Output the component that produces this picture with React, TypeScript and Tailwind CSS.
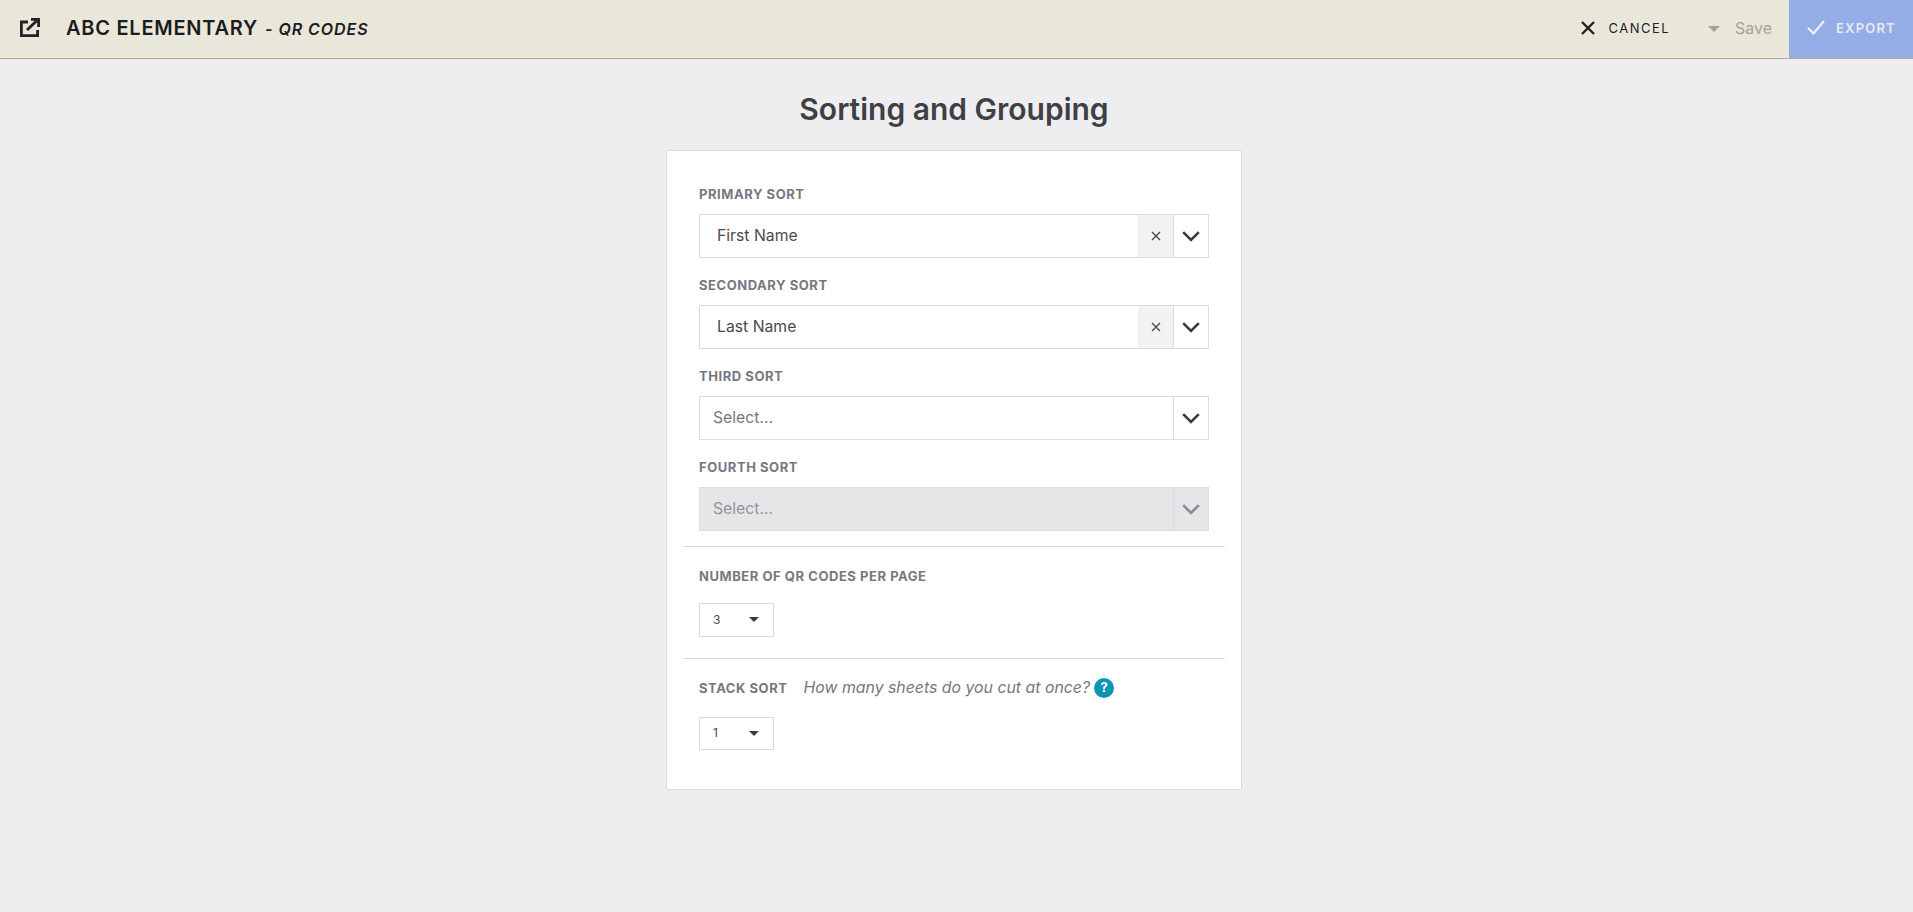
import React from 'react';

const Chevron = ({ muted }: { muted?: boolean }) => (
  <svg width="18" height="11" viewBox="0 0 18 11" fill="none">
    <path d="M1.2 1.2L9 9L16.8 1.2" stroke={muted ? '#8b8b93' : '#3a3a40'} strokeWidth="2.6" />
  </svg>
);

const Caret = () => (
  <svg width="10" height="5" viewBox="0 0 10 5">
    <path d="M0 0H10L5 5Z" fill="#3a3a40" />
  </svg>
);

const SortSelect = ({ label, value, disabled }: { label: string; value?: string; disabled?: boolean }) => (
  <div className="mb-[20.5px] last:mb-[15.5px]">
    <div className="h-[14px] mb-[13px] pt-[2px] flex items-center text-[13px] font-bold tracking-[0.55px] text-[#77777f]">{label}</div>
    <div className={`flex h-[43.5px] border-[1.5px] border-[#dcdcdc] ${disabled ? 'bg-[#e6e6e9]' : 'bg-white'}`}>
      {value ? (
        <div className="flex-1 flex items-center pl-[17px] text-[15.75px] text-[#4a4a50]">{value}</div>
      ) : (
        <div className={`flex-1 flex items-center pl-[13px] text-[15.75px] ${disabled ? 'text-[#94949c]' : 'text-[#77777f]'}`}>
          Select...
        </div>
      )}
      {value && (
        <div className="w-[35px] flex items-center justify-center bg-[#f2f2f2] text-[#3a3a40]">
          <svg width="10" height="10" viewBox="0 0 10 10" fill="none">
            <path d="M1 1L9 9M9 1L1 9" stroke="#3f4650" strokeWidth="1.3" />
          </svg>
        </div>
      )}
      <div className="w-[35px] flex items-center justify-center border-l-[1.5px] border-[#dcdcdc] pt-[1px]">
        <Chevron muted={disabled} />
      </div>
    </div>
  </div>
);

const SmallSelect = ({ value }: { value: string }) => (
  <div className="w-[75px] h-[33.5px] border-[1.5px] border-[#dcdcdc] flex items-center justify-between pl-[13px] pr-[14px] text-[12px] text-[#4a4a50]">
    <span>{value}</span>
    <Caret />
  </div>
);

export default function App() {
  return (
    <div className="min-h-[912px] bg-[#eeeef0] font-['Inter',sans-serif]">
      <header className="h-[59px] bg-[#e9e7da] border-b-[1.5px] border-[#acaa97] flex items-stretch">
        <div className="flex items-center pl-[20px] pb-[3px]">
          <svg width="20" height="19" viewBox="0 0 20 19" fill="none">
            <path d="M8 4H1.4V17.6H17.6V12" stroke="#222226" strokeWidth="2.8" />
            <path d="M7 12L17.5 2M11 1.4H18.6V9" stroke="#222226" strokeWidth="2.8" />
          </svg>
        </div>
        <div className="flex items-baseline pl-[26px] pt-[13px] text-[#1c1c20]">
          <span className="text-[20px] font-semibold tracking-[0.75px]">ABC ELEMENTARY</span>
          <span className="ml-[7px] text-[16px] font-semibold italic tracking-[0.95px]">- QR CODES</span>
        </div>
        <div className="ml-auto flex items-center pl-0">
          <svg className="mb-[2px]" width="14" height="14" viewBox="0 0 14 14" fill="none">
            <path d="M1 1L13 13M13 1L1 13" stroke="#222226" strokeWidth="2.4" />
          </svg>
          <span className="ml-[14px] text-[13px] tracking-[1.45px] text-[#222226]">CANCEL</span>
          <svg className="ml-[38px] mb-[1px]" width="12" height="6" viewBox="0 0 12 6">
            <path d="M0 0H12L6 6Z" fill="#a3a298" />
          </svg>
          <span className="ml-[15px] mb-[2px] text-[16px] text-[#a3a298]">Save</span>
          <div className="ml-[17px] h-full w-[124px] bg-[#94ade6] flex items-center pl-[18px]">
            <svg className="mb-[4px]" width="18" height="15" viewBox="0 0 18 15" fill="none">
              <path d="M1 8L6.5 13.5L17 1" stroke="#eef1f6" strokeWidth="2.2" />
            </svg>
            <span className="ml-[11px] text-[13px] font-semibold tracking-[1.2px] text-[#e6eaf2]">EXPORT</span>
          </div>
        </div>
      </header>

      <main className="flex flex-col items-center pr-[5px]">
        <h1 className="mt-[31px] mb-[22px] h-[38px] leading-[38px] text-[30px] font-semibold text-[#3f3f46]">Sorting and Grouping</h1>
        <div className="w-[576px] h-[640px] bg-white border-[1.5px] border-[#dcdcdc] px-[16px] pt-[36px]">
          <div className="px-[16px]">
            <SortSelect label="PRIMARY SORT" value="First Name" />
            <SortSelect label="SECONDARY SORT" value="Last Name" />
            <SortSelect label="THIRD SORT" />
            <SortSelect label="FOURTH SORT" disabled />
          </div>
          <div className="border-t-[1.5px] border-[#dcdcdc] px-[16px] pt-[23px] pb-[21px]">
            <div className="h-[14px] mb-[19px] flex items-center text-[13px] font-bold tracking-[0.55px] text-[#77777f]">
              NUMBER OF QR CODES PER PAGE
            </div>
            <SmallSelect value="3" />
          </div>
          <div className="border-t-[1.5px] border-[#dcdcdc] px-[16px] pt-[21px]">
            <div className="h-[18px] mb-[19px] flex items-center text-[#77777f]">
              <span className="text-[13px] font-bold tracking-[0.55px]">STACK SORT</span>
              <span className="ml-[16px] mb-[1px] text-[15.85px] italic">How many sheets do you cut at once?</span>
              <span className="ml-[4px] mb-[1px] w-[20px] h-[20px] rounded-full bg-[#0d95b5] text-white text-[13px] font-bold flex items-center justify-center">?</span>
            </div>
            <SmallSelect value="1" />
          </div>
        </div>
      </main>
    </div>
  );
}
